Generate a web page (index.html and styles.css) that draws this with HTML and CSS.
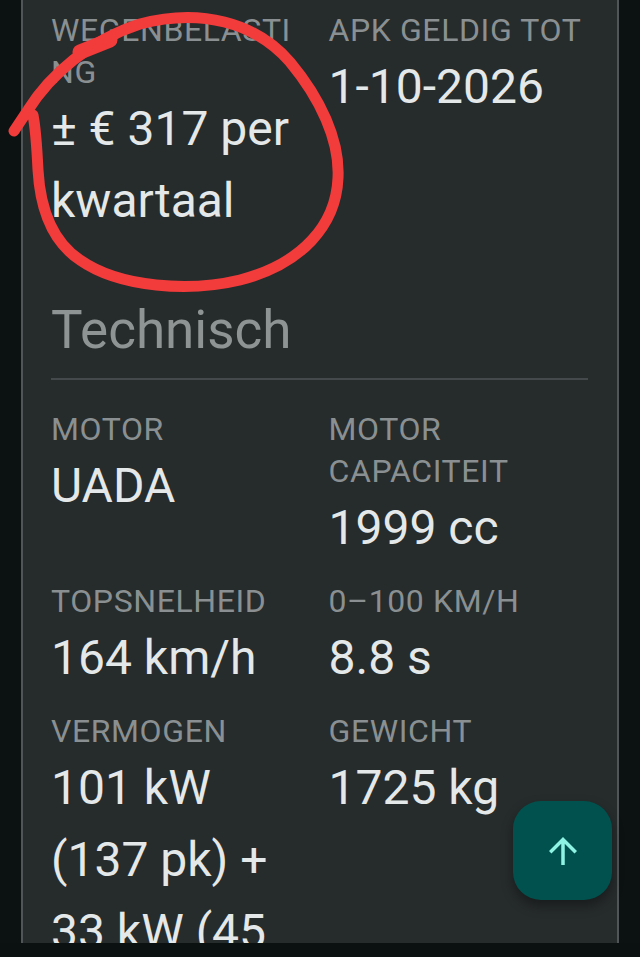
FILE: index.html
```html
<!DOCTYPE html>
<html lang="nl">
<head>
    <meta charset="UTF-8">
    <meta name="viewport" content="width=device-width, initial-scale=1.0">
    <title>Voertuiggegevens</title>
    <link rel="stylesheet" href="styles.css">
</head>
<body>

    <div class="screen">
        <div class="card">
            <div class="grid">
                <div class="item">
                    <div class="label">Wegenbelasting</div>
                    <div class="value">± € 317 per kwartaal</div>
                </div>
                <div class="item">
                    <div class="label">APK geldig tot</div>
                    <div class="value">1-10-2026</div>
                </div>
            </div>

            <h2 class="section-title">Technisch</h2>

            <div class="grid grid-tech">
                <div class="item">
                    <div class="label">Motor</div>
                    <div class="value">UADA</div>
                </div>
                <div class="item">
                    <div class="label">Motor capaciteit</div>
                    <div class="value">1999 cc</div>
                </div>
                <div class="item">
                    <div class="label">Topsnelheid</div>
                    <div class="value">164 km/h</div>
                </div>
                <div class="item">
                    <div class="label">0–100 km/h</div>
                    <div class="value">8.8 s</div>
                </div>
                <div class="item">
                    <div class="label">Vermogen</div>
                    <div class="value">101 kW (137 pk) + 33 kW (45 pk)</div>
                </div>
                <div class="item">
                    <div class="label">Gewicht</div>
                    <div class="value">1725 kg</div>
                </div>
            </div>
        </div>
    </div>
    <div class="nav-bar"></div>

    <!-- scroll to top -->
    <button class="fab" aria-label="Naar boven">
        <svg viewBox="0 0 24 24" width="42" height="42">
            <path fill="currentColor" d="M4 12l1.41 1.41L11 7.83V20h2V7.83l5.58 5.59L20 12l-8-8-8 8z"/>
        </svg>
    </button>

    <!-- hand drawn marking -->
    <svg class="marker" viewBox="0 0 640 300" width="640" height="300">
        <path d="M14 131 L28 110 C50 75 90 40 140 24 C200 8 255 22 290 62 C320 98 340 140 338 178 C336 225 302 264 240 280 C190 292 120 288 80 260 C50 240 40 205 38 170 C37 150 36 130 33 115"
              fill="none" stroke="#f23b3b" stroke-width="11" stroke-linecap="round" stroke-linejoin="round"/>
        <path d="M80 52 L110 40" fill="none" stroke="#f23b3b" stroke-width="15" stroke-linecap="round"/>
    </svg>

</body>
</html>
```

FILE: styles.css
```css
body {
    margin: 0;
    background: #0c1111;
    font-family: Roboto, "Noto Sans", sans-serif;
    overflow: hidden;
}
.screen {
    height: 943px;
    overflow: hidden;
    padding: 0 21px;
}
.card {
    background: #262b2c;
    border-left: 2px solid #505657;
    border-right: 2px solid #505657;
    padding: 9px 29px 40px 28px;
    min-height: 100%;
    box-sizing: border-box;
}
.grid {
    display: grid;
    grid-template-columns: 1fr 1fr;
    column-gap: 18px;
    row-gap: 16px;
}
.grid-tech {
    margin-top: 28px;
}
.label {
    color: #8a9091;
    font-size: 32px;
    line-height: 42px;
    letter-spacing: 0.6px;
    text-transform: uppercase;
    overflow-wrap: anywhere;
}
.value {
    color: #e4e8e8;
    font-size: 48px;
    line-height: 72px;
}
.section-title {
    color: #8e9494;
    font-size: 53px;
    font-weight: 400;
    line-height: 64px;
    margin: 61px 0 0;
    padding-bottom: 16px;
    border-bottom: 2px solid #444a4b;
}
.nav-bar {
    height: 14px;
    background: #0b1010;
}
.fab {
    position: fixed;
    right: 28px;
    bottom: 57px;
    width: 99px;
    height: 99px;
    border: none;
    border-radius: 28px;
    background: #01524e;
    color: #8ff3e4;
    display: flex;
    align-items: center;
    justify-content: center;
    box-shadow: 0 6px 12px rgba(0, 0, 0, 0.35);
    cursor: pointer;
}
.marker {
    position: absolute;
    top: 0;
    left: 0;
    pointer-events: none;
}
```
